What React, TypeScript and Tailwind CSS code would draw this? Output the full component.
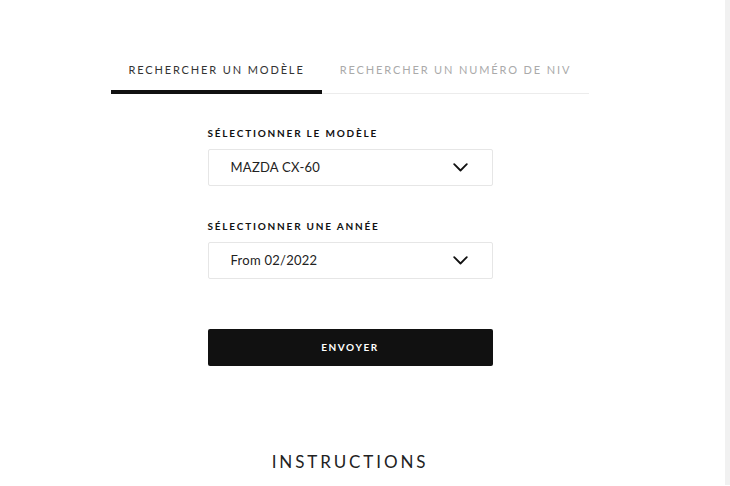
import React from "react";

const Chevron = () => (
  <svg width="15" height="9" viewBox="0 0 15 9" fill="none">
    <path d="M1.2 1.2 L7.5 7.5 L13.8 1.2" stroke="#111" strokeWidth="1.8" strokeLinecap="round" strokeLinejoin="round" />
  </svg>
);

const Select = ({ label, value, mt }: { label: string; value: string; mt: string }) => (
  <div className={mt}>
    <div className="text-[10px] font-bold tracking-[0.18em] text-[#111] leading-[14px]">{label}</div>
    <div className="mt-[9px] h-[37px] border border-[#e6e6e6] rounded-[2px] flex items-center justify-between pl-[22px] pr-[24px]">
      <span className="text-[13px] text-[#222] tracking-[0.02em]">{value}</span>
      <Chevron />
    </div>
  </div>
);

export default function App() {
  return (
    <div className="w-[730px] h-[486px] flex bg-white overflow-hidden" style={{ fontFamily: "Lato, 'Open Sans', sans-serif" }}>
      <div className="flex-1">
        <div className="w-[700px] flex flex-col items-center pt-[62px]">
          <div className="flex w-[478px] border-b border-[#ececec]">
            <div className="relative w-[211px] text-center pb-[15px] text-[11px] tracking-[0.17em] text-[#333] leading-[16px]">
              RECHERCHER UN MODÈLE
              <div className="absolute left-0 right-0 bottom-[-1px] h-[4px] bg-[#111]" />
            </div>
            <div className="w-[267px] text-center pb-[15px] text-[11px] tracking-[0.17em] text-[#aaa] leading-[16px]">
              RECHERCHER UN NUMÉRO DE NIV
            </div>
          </div>
          <div className="w-[285px]">
            <Select label="SÉLECTIONNER LE MODÈLE" value="MAZDA CX-60" mt="mt-[32px]" />
            <Select label="SÉLECTIONNER UNE ANNÉE" value="From 02/2022" mt="mt-[33px]" />
            <div className="mt-[50px] h-[37px] bg-[#111] rounded-[2px] flex items-center justify-center text-white text-[10px] font-bold tracking-[0.16em]">
              ENVOYER
            </div>
          </div>
          <div className="mt-[83px] text-[17px] tracking-[0.17em] text-[#222]">INSTRUCTIONS</div>
        </div>
      </div>
      <div className="w-[5px] h-[485px] bg-[#f1f1f1]" />
    </div>
  );
}
